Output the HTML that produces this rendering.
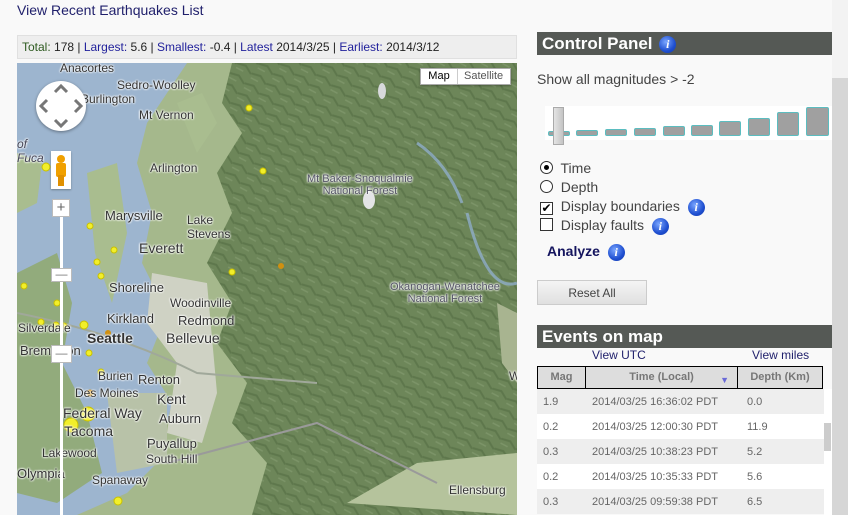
<!DOCTYPE html>
<html><head><meta charset="utf-8"><style>
*{margin:0;padding:0;box-sizing:border-box}
body{width:848px;height:515px;overflow:hidden;background:#f9f9f9;font-family:"Liberation Sans",Tahoma,sans-serif;position:relative;font-size:12px}
.abs{position:absolute}
a{color:#1f1f6b;text-decoration:none}
.info{display:inline-block;width:17px;height:17px;border-radius:50%;background:radial-gradient(circle at 40% 35%,#7aa6ff,#1f4fd0 60%,#1238a8);color:#fff;font:italic bold 12px "Liberation Serif",serif;text-align:center;line-height:17px;vertical-align:middle}
.hdr{background:#555955;color:#fff;font-weight:bold;font-size:17px;padding-left:5px}
.ml{position:absolute;font-size:12px;color:#333;text-shadow:0 0 2px #fff,0 0 2px #fff,0 0 2px #fff;white-space:nowrap}
table{border-collapse:collapse}
td{font-size:11px;color:#666;height:25px}
</style></head><body>
<a class="abs" style="left:17px;top:2px;font-size:14px">View Recent Earthquakes List</a>
<div class="abs" style="left:17px;top:35px;width:500px;height:24px;background:#eeeeee;border:1px solid #e0e0e0;font-size:12px;line-height:22px;padding-left:4px;color:#222">
<span style="color:#2d5a1f">Total:</span> 178 | <span style="color:#1f1f9b">Largest:</span> 5.6 | <span style="color:#1f1f9b">Smallest:</span> -0.4 | <span style="color:#1f1f9b">Latest</span> 2014/3/25 | <span style="color:#1f1f9b">Earliest:</span> 2014/3/12</div>

<div class="abs" style="left:17px;top:63px;width:500px;height:452px;overflow:hidden;background:#6a8256">
<svg width="500" height="452" style="position:absolute;left:0;top:0">
<defs><pattern id="r" width="18" height="12" patternUnits="userSpaceOnUse" patternTransform="rotate(35)"><rect width="18" height="12" fill="#6d8659"/><path d="M0 6 L9 3 L18 7" stroke="#5e774c" stroke-width="2" fill="none"/><path d="M2 10 L10 9" stroke="#7c9468" stroke-width="1.5"/></pattern></defs>
<rect width="500" height="452" fill="url(#r)"/>
<path d="M0 0 H215 L205 40 L225 70 L200 110 L215 150 L190 200 L215 240 L200 280 L230 320 L215 360 L250 400 L235 452 H0Z" fill="#a5b88c"/>
<path d="M0 0 H170 L150 30 L130 60 L120 100 L135 150 L125 200 L150 250 L130 300 L155 340 L140 400 L110 430 L60 452 H0Z" fill="#9db5cf"/>
<path d="M0 210 L40 190 L55 240 L45 300 L70 350 L85 410 L40 440 L0 430Z" fill="#92ab7c"/>
<path d="M70 110 L100 100 L110 170 L95 240 L78 190Z" fill="#a9bd8f"/>
<path d="M0 90 L25 100 L20 140 L0 150Z" fill="#a9bd8f"/>
<path d="M160 40 L185 30 L200 60 L180 90Z" fill="#a9bd8f"/>
<path d="M135 210 L190 220 L200 330 L185 380 L150 370 L160 300 L130 260Z" fill="#cfd2c4"/>
<path d="M90 330 L150 330 L150 400 L100 410Z" fill="#b8c2a8"/>
<path d="M330 440 L400 400 L500 390 L500 452Z" fill="#b5c39c"/>
<path d="M480 240 L500 250 L500 320 L485 300Z" fill="#a8b490"/>
<ellipse cx="352" cy="137" rx="6" ry="9" fill="#e3e4e6"/>
<ellipse cx="365" cy="28" rx="4" ry="8" fill="#d8d9dc"/>
<path d="M450 150 Q470 230 500 220" stroke="#8fadc8" stroke-width="3" fill="none" opacity=".8"/>
<path d="M400 80 Q430 100 445 140" stroke="#8fadc8" stroke-width="3" fill="none" opacity=".8"/>
<path d="M0 250 Q100 270 180 310 L300 320" stroke="#a0a89a" stroke-width="2" fill="none"/>
<path d="M150 400 L300 360 L420 420" stroke="#9a9a9a" stroke-width="2" fill="none"/>
<g fill="#f2ef2a" stroke="#c8c000" stroke-width="1">
<circle cx="29" cy="104" r="4"/><circle cx="24" cy="259" r="3"/><circle cx="39" cy="262" r="3"/><circle cx="47" cy="263" r="3"/><circle cx="80" cy="199" r="3"/><circle cx="67" cy="262" r="4"/><circle cx="72" cy="290" r="3"/><circle cx="71" cy="351" r="7"/><circle cx="54" cy="362" r="7"/><circle cx="84" cy="309" r="3"/><circle cx="232" cy="45" r="3"/><circle cx="84" cy="213" r="3"/><circle cx="7" cy="223" r="3"/><circle cx="40" cy="240" r="3"/><circle cx="246" cy="108" r="3"/><circle cx="101" cy="438" r="4"/><circle cx="215" cy="209" r="3"/><circle cx="73" cy="163" r="3"/><circle cx="97" cy="187" r="3"/></g>
<circle cx="73" cy="330" r="3.5" fill="#d09010"/><circle cx="264" cy="203" r="3" fill="#d09010"/><circle cx="91" cy="270" r="3" fill="#d09010"/>
</svg>
<div class="ml" style="left:43px;top:-2px">Anacortes</div>
<div class="ml" style="left:100px;top:15px">Sedro-Woolley</div>
<div class="ml" style="left:64px;top:29px">Burlington</div>
<div class="ml" style="left:122px;top:45px">Mt Vernon</div>
<div class="ml" style="left:0;top:74px;font-style:italic;color:#445">of<br>Fuca</div>
<div class="ml" style="left:133px;top:98px">Arlington</div>
<div class="ml" style="left:88px;top:145px;font-size:13px">Marysville</div>
<div class="ml" style="left:170px;top:150px">Lake<br>Stevens</div>
<div class="ml" style="left:122px;top:177px;font-size:14px">Everett</div>
<div class="ml" style="left:92px;top:217px;font-size:13px">Shoreline</div>
<div class="ml" style="left:153px;top:233px">Woodinville</div>
<div class="ml" style="left:90px;top:248px;font-size:13px">Kirkland</div>
<div class="ml" style="left:161px;top:250px;font-size:13px">Redmond</div>
<div class="ml" style="left:1px;top:258px">Silverdale</div>
<div class="ml" style="left:70px;top:267px;font-size:14px;font-weight:bold">Seattle</div>
<div class="ml" style="left:149px;top:267px;font-size:14px">Bellevue</div>
<div class="ml" style="left:3px;top:280px;font-size:13px">Bremerton</div>
<div class="ml" style="left:81px;top:306px">Burien</div>
<div class="ml" style="left:121px;top:309px;font-size:13px">Renton</div>
<div class="ml" style="left:58px;top:323px">Des Moines</div>
<div class="ml" style="left:140px;top:328px;font-size:14px">Kent</div>
<div class="ml" style="left:46px;top:342px;font-size:14px">Federal Way</div>
<div class="ml" style="left:142px;top:348px;font-size:13px">Auburn</div>
<div class="ml" style="left:47px;top:360px;font-size:14px">Tacoma</div>
<div class="ml" style="left:130px;top:373px;font-size:13px">Puyallup</div>
<div class="ml" style="left:25px;top:383px">Lakewood</div>
<div class="ml" style="left:129px;top:389px">South Hill</div>
<div class="ml" style="left:0;top:403px;font-size:13px">Olympia</div>
<div class="ml" style="left:75px;top:410px">Spanaway</div>
<div class="ml" style="left:290px;top:110px;font-size:11px;text-align:center;color:#556">Mt Baker-Snoqualmie<br>National Forest</div>
<div class="ml" style="left:373px;top:218px;font-size:11px;text-align:center;color:#556">Okanogan-Wenatchee<br>National Forest</div>
<div class="ml" style="left:432px;top:420px">Ellensburg</div>
<div class="ml" style="left:492px;top:306px">Wena</div>
<div class="abs" style="left:403px;top:5px;width:91px;height:17px;background:#fff;border:1px solid #aaa;font-size:11px;line-height:15px;box-shadow:0 1px 2px rgba(0,0,0,.3)"><span style="display:inline-block;width:37px;text-align:center;border-right:1px solid #ccc;color:#000">Map</span><span style="padding-left:6px;color:#555">Satellite</span></div>
<div class="abs" style="left:19px;top:18px;width:50px;height:50px;border-radius:50%;background:#fff;box-shadow:0 1px 3px rgba(0,0,0,.4)">
<svg width="50" height="50"><g stroke="#777" stroke-width="3" fill="none"><path d="M19 11 L25 5 L31 11"/><path d="M19 39 L25 45 L31 39"/><path d="M11 19 L5 25 L11 31"/><path d="M39 19 L45 25 L39 31"/></g></svg></div>
<div class="abs" style="left:34px;top:88px;width:20px;height:38px;background:#fff;box-shadow:0 1px 2px rgba(0,0,0,.3)"><svg width="20" height="38"><circle cx="10" cy="8" r="4" fill="#f0a000"/><rect x="5" y="12" width="10" height="14" rx="2" fill="#f0a000"/><rect x="7" y="24" width="6" height="11" fill="#e09000"/></svg></div>
<div class="abs" style="left:43px;top:152px;width:3px;height:300px;background:#fff"></div>
<div class="abs" style="left:35px;top:136px;width:18px;height:18px;background:#fff;border:1px solid #bbb;text-align:center;font-size:15px;line-height:16px;color:#666">+</div>
<div class="abs" style="left:34px;top:205px;width:21px;height:14px;background:#fff;border:1px solid #bbb;text-align:center;line-height:11px;color:#777">—</div>
<div class="abs" style="left:34px;top:282px;width:21px;height:18px;background:#fff;border:1px solid #bbb;text-align:center;line-height:15px;color:#777">—</div>
</div>

<div class="abs" style="left:832px;top:0;width:16px;height:78px;background:#f3f3f3"></div>
<div class="abs" style="left:832px;top:78px;width:16px;height:437px;background:#d6d6d6"></div>

<div class="abs hdr" style="left:537px;top:32px;width:295px;height:23px;line-height:23px">Control Panel <span class="info" style="margin-left:2px">i</span></div>
<div class="abs" style="left:537px;top:71px;font-size:14px;color:#444">Show all magnitudes &gt; -2</div>
<div class="abs" style="left:545px;top:106px;width:287px;height:34px;background:#fff"></div>
<div class="abs" style="left:548px;top:131px;width:22px;height:5px;background:#a0a0a0;border:1px solid #5bbdc0;border-radius:2px"></div>
<div class="abs" style="left:576px;top:130px;width:22px;height:6px;background:#a0a0a0;border:1px solid #5bbdc0;border-radius:2px"></div>
<div class="abs" style="left:605px;top:129px;width:22px;height:7px;background:#a0a0a0;border:1px solid #5bbdc0;border-radius:2px"></div>
<div class="abs" style="left:634px;top:128px;width:22px;height:8px;background:#a0a0a0;border:1px solid #5bbdc0;border-radius:2px"></div>
<div class="abs" style="left:663px;top:126px;width:22px;height:10px;background:#a0a0a0;border:1px solid #5bbdc0;border-radius:2px"></div>
<div class="abs" style="left:691px;top:125px;width:22px;height:11px;background:#a0a0a0;border:1px solid #5bbdc0;border-radius:2px"></div>
<div class="abs" style="left:719px;top:121px;width:22px;height:15px;background:#a0a0a0;border:1px solid #5bbdc0;border-radius:2px"></div>
<div class="abs" style="left:748px;top:118px;width:22px;height:18px;background:#a0a0a0;border:1px solid #5bbdc0;border-radius:2px"></div>
<div class="abs" style="left:777px;top:112px;width:22px;height:24px;background:#a0a0a0;border:1px solid #5bbdc0;border-radius:2px"></div>
<div class="abs" style="left:806px;top:107px;width:23px;height:29px;background:#a0a0a0;border:1px solid #5bbdc0;border-radius:2px"></div>
<div class="abs" style="left:553px;top:107px;width:11px;height:38px;background:linear-gradient(90deg,#e4e4e4,#c4c4c4);border:1px solid #aaa"></div>

<div class="abs" style="left:540px;top:159px;font-size:14px;color:#444;line-height:19px">
<div><span style="display:inline-block;width:13px;height:13px;border:1px solid #333;border-radius:50%;vertical-align:-1px;position:relative;background:#fff"><span style="position:absolute;left:3px;top:3px;width:5px;height:5px;border-radius:50%;background:#000"></span></span>&nbsp; Time</div>
<div><span style="display:inline-block;width:13px;height:13px;border:1px solid #333;border-radius:50%;vertical-align:-1px;background:#fff"></span>&nbsp; Depth</div>
<div><span style="display:inline-block;width:13px;height:13px;border:1px solid #333;vertical-align:-1px;background:#fff;font-size:12px;line-height:11px;text-align:center;color:#000">✔</span>&nbsp; Display boundaries &nbsp;<span class="info">i</span></div>
<div><span style="display:inline-block;width:13px;height:13px;border:1px solid #333;vertical-align:-1px;background:#fff"></span>&nbsp; Display faults &nbsp;<span class="info">i</span></div>
</div>
<div class="abs" style="left:547px;top:243px;font-size:14px;font-weight:bold;color:#14145e">Analyze &nbsp;<span class="info">i</span></div>
<div class="abs" style="left:537px;top:280px;width:110px;height:25px;background:linear-gradient(#f4f4f4,#e0e0e0);border:1px solid #ccc;text-align:center;line-height:24px;font-size:12px;color:#444">Reset All</div>

<div class="abs hdr" style="left:537px;top:325px;width:295px;height:23px;line-height:24px">Events on map</div>
<a class="abs" style="left:592px;top:348px;font-size:12px">View UTC</a>
<a class="abs" style="left:752px;top:348px;font-size:12px">View miles</a>
<div class="abs" style="left:537px;top:366px;width:286px;height:23px;background:#ddd;border:1px solid #000;font-size:11px;font-weight:bold;color:#777;line-height:21px">
<span class="abs" style="left:0;width:48px;text-align:center;border-right:1px solid #000;height:21px">Mag</span>
<span class="abs" style="left:48px;width:152px;text-align:center;border-right:1px solid #000;height:21px">Time (Local)<span style="position:absolute;right:8px;top:3px;color:#6a6ad8;font-size:9px">▼</span></span>
<span class="abs" style="left:200px;width:84px;text-align:center">Depth (Km)</span></div>
<table class="abs" style="left:537px;top:389px;width:287px">
<tr style="background:#eee"><td style="padding-left:6px;width:55px">1.9</td><td style="width:155px">2014/03/25 16:36:02 PDT</td><td>0.0</td></tr>
<tr style="background:#fff"><td style="padding-left:6px">0.2</td><td>2014/03/25 12:00:30 PDT</td><td>11.9</td></tr>
<tr style="background:#eee"><td style="padding-left:6px">0.3</td><td>2014/03/25 10:38:23 PDT</td><td>5.2</td></tr>
<tr style="background:#fff"><td style="padding-left:6px">0.2</td><td>2014/03/25 10:35:33 PDT</td><td>5.6</td></tr>
<tr style="background:#eee"><td style="padding-left:6px">0.3</td><td>2014/03/25 09:59:38 PDT</td><td>6.5</td></tr>
</table>
<div class="abs" style="left:824px;top:389px;width:8px;height:126px;background:#fff"></div>
<div class="abs" style="left:824px;top:423px;width:7px;height:28px;background:#ccc"></div>
</body></html>
